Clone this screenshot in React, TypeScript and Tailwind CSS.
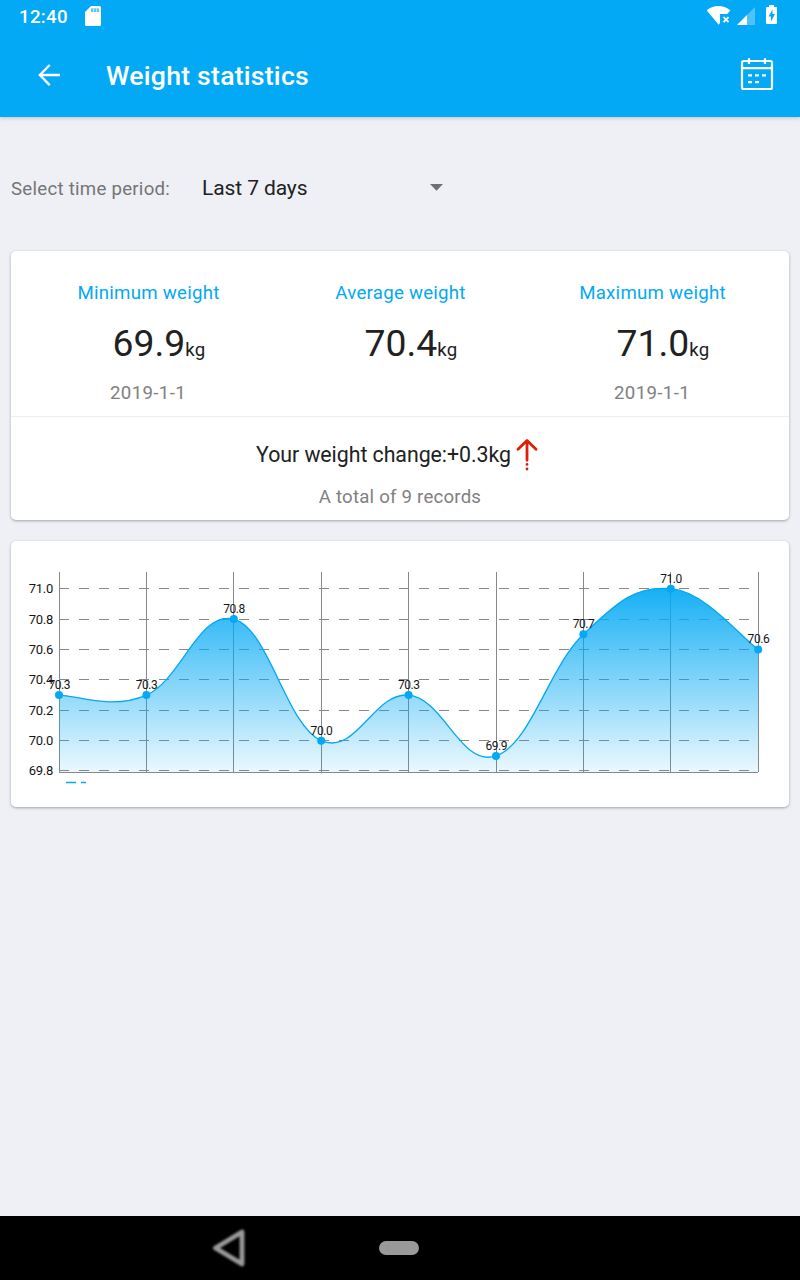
import React from "react";

const values = [70.3, 70.3, 70.8, 70.0, 70.3, 69.9, 70.7, 71.0, 70.6];
const gridX = [48.5, 135.5, 222.5, 310.5, 397.5, 485.5, 572.5, 659.5, 747.5];
const gridY = [47.5, 78.5, 108.5, 138.5, 169.5, 199.5, 229.5];
const axisLabels = ["71.0", "70.8", "70.6", "70.4", "70.2", "70.0", "69.8"];

const points = values.map((v, i) => ({
  x: 48 + i * 87.4,
  y: 47.7 + (71 - v) * 152,
  label: v.toFixed(1),
}));

function smoothPath() {
  const k = 0.2;
  const at = (i: number) => points[Math.max(0, Math.min(points.length - 1, i))];
  let d = `M${points[0].x} ${points[0].y}`;
  for (let i = 1; i < points.length; i++) {
    const pp = at(i - 2);
    const p = at(i - 1);
    const c = at(i);
    const n = at(i + 1);
    d += ` C${p.x + (c.x - pp.x) * k} ${p.y + (c.y - pp.y) * k} ${c.x - (n.x - p.x) * k} ${c.y - (n.y - p.y) * k} ${c.x} ${c.y}`;
  }
  return d;
}

function Chart() {
  const line = smoothPath();
  return (
    <svg width="778" height="266" viewBox="0 0 778 266" className="block">
      <defs>
        <linearGradient id="fade" gradientUnits="userSpaceOnUse" x1="0" y1="31" x2="0" y2="231">
          <stop offset="0" stopColor="#03a9f4" stopOpacity="1" />
          <stop offset="1" stopColor="#03a9f4" stopOpacity="0.08" />
        </linearGradient>
      </defs>
      <g stroke="#888888" strokeWidth="1" fill="none" shapeRendering="crispEdges">
        {gridX.map((x) => (
          <path key={x} d={`M${x} 31V231`} />
        ))}
        {gridY.map((y) => (
          <path key={y} d={`M48 ${y}H748`} strokeDasharray="10 10" />
        ))}
        <path d="M48 231.5H747" />
      </g>
      <path d={`${line} L${points[8].x} 231 L${points[0].x} 231 Z`} fill="url(#fade)" />
      <path d={line} fill="none" stroke="#03a9f4" strokeWidth="1.33" />
      <g fontSize="13" fill="#151515" textAnchor="end" letterSpacing="-0.25">
        {axisLabels.map((t, i) => (
          <text key={t} x="42" y={gridY[i] + 4.4}>{t}</text>
        ))}
      </g>
      {points.map((p, i) => (
        <circle key={i} cx={p.x} cy={p.y} r="4" fill="#03a9f4" />
      ))}
      <g fontSize="12" fill="#151515" textAnchor="middle" letterSpacing="-0.45">
        {points.map((p, i) => (
          <text key={i} x={p.x + 0.2} y={p.y - 6.2}>{p.label}</text>
        ))}
      </g>
      <path d="M55 241.5h10m5 0h5" stroke="#03a9f4" strokeWidth="1.3" />
    </svg>
  );
}

function Stat({ label, value, date }: { label: string; value: string; date?: string }) {
  return (
    <div className="flex w-[252px] flex-col items-center">
      <div className="h-[22px] whitespace-nowrap pl-px text-[18.67px] leading-[22px] tracking-[0.25px] text-[#03a9f4]">{label}</div>
      <div className="mt-[17px] flex h-[44px] items-baseline pl-[22px] text-[#212121]">
        <span className="text-[37.3px] leading-[44px]">{value}</span>
        <span className="text-[18.67px] tracking-[0.3px]">kg</span>
      </div>
      <div className="mt-[17px] h-[22px] text-[18.67px] leading-[22px] tracking-[0.35px] text-[#808080]">{date}</div>
    </div>
  );
}

const card = "mx-[11px] w-[778px] rounded-[5px] bg-white shadow-[0_1px_3px_rgba(0,0,0,0.32)]";

export default function App() {
  return (
    <div className="flex h-[1280px] w-[800px] flex-col overflow-hidden bg-[#eff0f6] font-['Roboto',sans-serif]">
      <header className="z-10 h-[117px] shrink-0 bg-[#03a9f4] text-white shadow-[0_1px_4px_rgba(0,0,0,0.22)]">
        <div className="flex h-[32px] items-center">
          <span className="ml-[19px] w-[66px] pt-px text-[18.67px] font-medium leading-[32px] tracking-[0.3px]">12:40</span>
          <svg width="16" height="20" viewBox="0 0 16 20" fillRule="evenodd" fill="#fff">
            <path d="M6 0H14.5Q16 0 16 1.5V18.5Q16 20 14.5 20H1.5Q0 20 0 18.5V6ZM6 2.5V6H14V2.5Z" />
            <path d="M8 2.5h1V6H8zM11 2.5h1V6h-1z" opacity="0.6" />
            <path d="M6 2.5H14V6H6Z" opacity="0.35" />
          </svg>
          <svg className="ml-[606px]" width="72" height="32" viewBox="0 0 72 32" fill="#fff">
            <path d="M-0.3 10.3C6.5 4.6 16.5 4.6 23.3 10.3L20.3 14H13V23L11.6 24.8Z" />
            <path d="M16.6 17.2l4.9 4.9m0-4.9l-4.9 4.9" stroke="#fff" strokeWidth="1.8" />
            <path d="M30 25L48 7V25Z" opacity="0.3" />
            <path d="M30 25L40 15V25Z" />
            <path fillRule="evenodd" d="M62 5H67V7H69Q70 7 70 8V23Q70 24 69 24H60Q59 24 59 23V8Q59 7 60 7H62ZM65.5 9.5L61.5 16.5H64V21.5L68 14H65.5Z" />
          </svg>
        </div>
        <div className="flex h-[85px] items-center">
          <svg className="ml-[38px]" width="23" height="24" viewBox="0 0 23 24" fill="none" stroke="#fff" strokeWidth="2.3">
            <path d="M22 12H2M11.7 2L1.8 12L11.7 22.1" />
          </svg>
          <h1 className="ml-[45px] w-[634px] pt-[2px] text-[26.67px] font-medium leading-8 tracking-[0.22px]">Weight statistics</h1>
          <svg width="34" height="34" viewBox="0 0 34 34" fill="none" stroke="#fff" strokeWidth="2.2">
            <rect x="2" y="3" width="30" height="28" rx="1.8" />
            <path d="M2 10.2H32M9 0.3V6M25 0.3V6" />
            <path d="M8 17.3h4m3 0h4m3 0h4M8 24.2h4m3 0h4" />
          </svg>
        </div>
      </header>

      <main className="flex flex-1 flex-col">
        <div className="mt-[49px] flex h-[44px] items-center pl-[11px]">
          <span className="w-[191px] pt-[2px] text-[18.67px] leading-[22px] tracking-[0.25px] text-[#757575]">Select time period:</span>
          <span className="w-[228px] text-[21px] leading-[26px] tracking-[-0.1px] text-[#212121]">Last 7 days</span>
          <svg className="mb-[2px]" width="13" height="7" viewBox="0 0 13 7" fill="#6f7073">
            <path d="M0 0H13L6.5 6.7Z" />
          </svg>
        </div>

        <section className={`${card} mt-[41px] h-[269px] shrink-0`}>
          <div className="flex h-[166px] justify-center border-b border-[#eeeeee] pt-[31px]">
            <Stat label="Minimum weight" value="69.9" date="2019-1-1" />
            <Stat label="Average weight" value="70.4" />
            <Stat label="Maximum weight" value="71.0" date="2019-1-1" />
          </div>
          <div className="mt-[21px] flex h-[34px] items-center justify-center text-[21.33px] text-[#212121]">
            <span className="tracking-[-0.05px]">Your weight change:+0.3kg</span>
            <svg className="ml-[5px] mr-[6px]" width="22" height="34" viewBox="0 0 22 34" fill="none" stroke="#dd1f0c" strokeWidth="2.8" strokeLinecap="round">
              <path d="M11 22.3V3M2 11.3L11 2.6L20 11.3" strokeLinejoin="round" />
              <path d="M11 26.4v0.01M11 31v0.01" />
            </svg>
          </div>
          <div className="mt-[14px] text-center text-[18.67px] leading-[22px] tracking-[0.2px] text-[#808080]">A total of 9 records</div>
        </section>

        <section className={`${card} mt-[21px] h-[266px] shrink-0`}>
          <Chart />
        </section>
      </main>

      <nav className="flex h-[64px] shrink-0 items-center bg-black">
        <svg className="ml-[212px] blur-[0.8px]" width="36" height="42" viewBox="0 0 36 42" fill="none" stroke="#999" strokeWidth="4.8" strokeLinejoin="round">
          <path d="M3.5 21L30 5V37Z" />
        </svg>
        <div className="ml-[131px] h-[14px] w-[40px] rounded-[7px] bg-[#999999]" />
      </nav>
    </div>
  );
}
